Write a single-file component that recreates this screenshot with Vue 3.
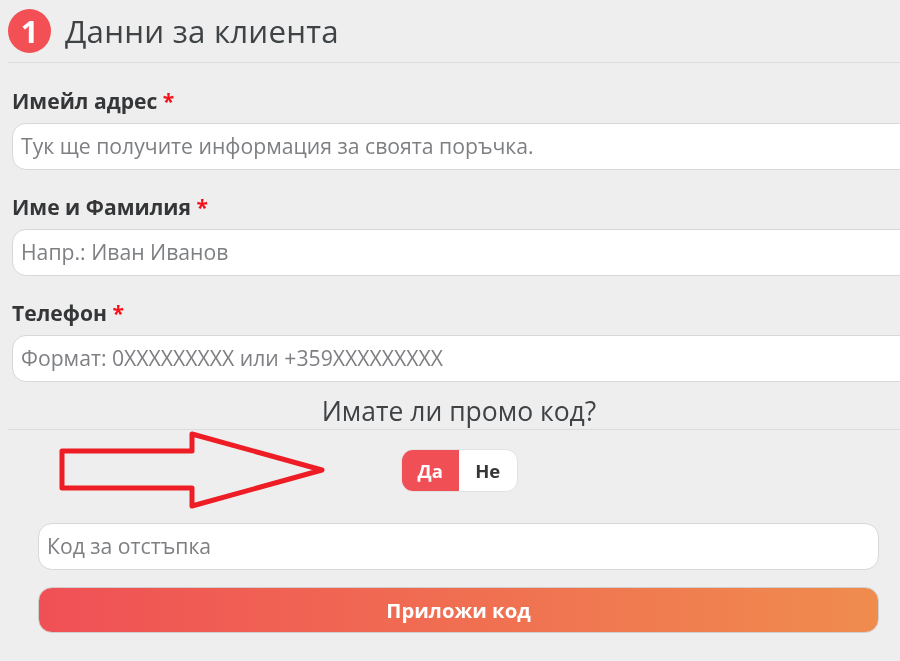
<script setup>
const fields = [
  { label: 'Имейл адрес', placeholder: 'Тук ще получите информация за своята поръчка.' },
  { label: 'Име и Фамилия', placeholder: 'Напр.: Иван Иванов' },
  { label: 'Телефон', placeholder: 'Формат: 0XXXXXXXXX или +359XXXXXXXXX' },
]
</script>

<template>
  <div class="page">
    <header class="head">
      <span class="badge">1</span>
      <h2 class="title">Данни за клиента</h2>
    </header>

    <div class="fields">
      <div v-for="f in fields" :key="f.label" class="field">
        <label class="label">{{ f.label }} <span class="req">*</span></label>
        <div class="input wide">{{ f.placeholder }}</div>
      </div>
    </div>

    <h3 class="promo">Имате ли промо код?</h3>

    <div class="toggle-row">
      <div class="toggle">
        <span class="opt on">Да</span>
        <span class="opt">Не</span>
      </div>
      <svg class="arrow" width="290" height="90" viewBox="0 0 290 90">
        <path d="M3 20 H133 V3 L263 39 L133 75 V57 H3 Z" fill="none" stroke="#ee1c25" stroke-width="5" stroke-linejoin="round" />
      </svg>
    </div>

    <div class="promo-form">
      <div class="input code">Код за отстъпка</div>
      <button class="apply">Приложи код</button>
    </div>
  </div>
</template>

<style scoped>
.page {
  width: 900px;
  height: 661px;
  overflow: hidden;
  box-sizing: border-box;
  padding: 9px 0 0 8px;
  background: #eeeeee;
  font-family: "Open Sans", "Liberation Sans", sans-serif;
  color: #333;
  filter: blur(0.35px);
}
.head {
  display: flex;
  align-items: center;
  gap: 14px;
  height: 54px;
  padding-bottom: 10px;
  box-sizing: border-box;
  border-bottom: 1px solid #dcdcdc;
}
.badge {
  width: 43px;
  height: 44px;
  flex: none;
  border-radius: 50%;
  background: #f25055;
  color: #fff;
  font-size: 31px;
  font-weight: 700;
  line-height: 44px;
  text-align: center;
}
.title {
  margin: 0;
  font-size: 31.3px;
  font-weight: 400;
  line-height: 44px;
  letter-spacing: 0.2px;
  color: #3f4346;
}
.fields {
  display: flex;
  flex-direction: column;
  gap: 23px;
  padding: 24px 0 0 4px;
}
.field {
  display: flex;
  flex-direction: column;
  gap: 8px;
}
.label {
  font-size: 21.1px;
  font-weight: 700;
  line-height: 28px;
  color: #343638;
}
.req {
  color: #f5111a;
}
.input {
  box-sizing: border-box;
  height: 47px;
  padding: 0 8px;
  background: #fff;
  border: 1.5px solid #d8d8d8;
  border-radius: 14px;
  font-size: 21.2px;
  line-height: 44px;
  color: #7d7f82;
}
.wide {
  width: 910px;
}
.promo {
  margin: 13px 0 0;
  width: 902px;
  height: 34px;
  border-bottom: 1px solid #dcdcdc;
  font-size: 26.5px;
  font-weight: 400;
  line-height: 32px;
  text-align: center;
  color: #3f4346;
}
.toggle-row {
  position: relative;
  display: flex;
  justify-content: center;
  padding: 19px 0 0;
  width: 902px;
}
.toggle {
  display: flex;
  height: 43px;
  width: 117px;
  overflow: hidden;
  border-radius: 12px;
  background: #fff;
  border: 1px solid #e2e2e2;
  box-sizing: border-box;
  font-size: 18.5px;
  font-weight: 700;
  line-height: 41px;
  text-align: center;
}
.opt {
  flex: 1;
  color: #343638;
}
.opt.on {
  background: #f05055;
  color: #fff;
}
.arrow {
  position: absolute;
  left: 51px;
  top: 1px;
}
.promo-form {
  display: flex;
  flex-direction: column;
  gap: 17px;
  margin: 31px 0 0 30px;
  width: 841px;
}
.code {
  width: 100%;
}
.apply {
  height: 46px;
  border: 1px solid #d0d0d0;
  border-radius: 14px;
  background: linear-gradient(90deg, #f05055, #f08c4e) border-box;
  color: #fff;
  font-family: inherit;
  font-size: 20.3px;
  font-weight: 700;
}
</style>
